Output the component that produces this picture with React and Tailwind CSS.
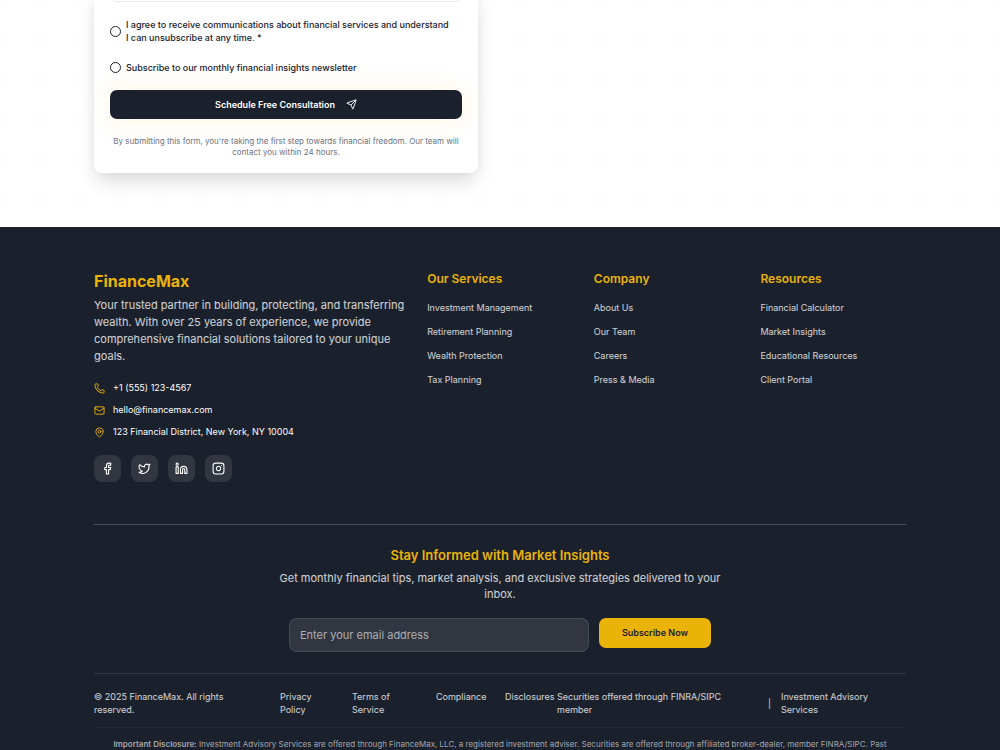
import { Send, Phone, Mail, MapPin, Facebook, Twitter, Linkedin, Instagram } from "lucide-react";

const columns = [
  { title: "Our Services", links: ["Investment Management", "Retirement Planning", "Wealth Protection", "Tax Planning"] },
  { title: "Company", links: ["About Us", "Our Team", "Careers", "Press & Media"] },
  { title: "Resources", links: ["Financial Calculator", "Market Insights", "Educational Resources", "Client Portal"] },
];

const contacts = [
  { icon: Phone, text: "+1 (555) 123-4567" },
  { icon: Mail, text: "hello@financemax.com" },
  { icon: MapPin, text: "123 Financial District, New York, NY 10004" },
];

const socials = [
  { icon: Facebook, name: "Facebook" },
  { icon: Twitter, name: "Twitter" },
  { icon: Linkedin, name: "LinkedIn" },
  { icon: Instagram, name: "Instagram" },
];

function Consent({ id, children }) {
  return (
    <div className="flex items-center gap-[5px]">
      <input
        id={id}
        type="checkbox"
        className="size-[11px] shrink-0 appearance-none rounded-full border border-[#1a202c] bg-white checked:bg-[#1a202c]"
      />
      <label htmlFor={id} className="text-[9px] leading-[13px] font-medium">
        {children}
      </label>
    </div>
  );
}

function ConsultationForm() {
  return (
    <section className="overflow-hidden bg-[radial-gradient(circle,#f8f8f8_1px,transparent_2px)] bg-[size:40px_40px] bg-[position:20px_20px] pb-[54px]">
      <div className="mx-auto max-w-[852px] px-5">
        <form className="-mt-2 w-full max-w-[384px] rounded-b-lg bg-white px-4 pt-[2px] pb-[15px] shadow-[0_10px_20px_-3px_rgba(0,0,0,0.16),0_0_10px_rgba(0,0,0,0.03)]">
          <div className="h-2 rounded-b-lg border-b border-[#e9eaec]" />
          <div className="flex flex-col gap-[17px] pt-4">
            <Consent id="agree">
              I agree to receive communications about financial services and understand
              <br />I can unsubscribe at any time. *
            </Consent>
            <Consent id="newsletter">Subscribe to our monthly financial insights newsletter</Consent>
          </div>
          <button
            type="button"
            className="mt-4 flex h-[29px] w-full items-center justify-center gap-[11px] rounded-[7px] bg-[#1a202c] text-[9px] font-semibold text-white shadow-[0_0_27px_rgba(234,179,8,0.15)]"
          >
            Schedule Free Consultation
            <Send className="size-[11px]" />
          </button>
          <p className="mt-[17px] text-center text-[8px] leading-[11px] text-gray-500">
            By submitting this form, you're taking the first step towards financial freedom. Our team will contact you
            within 24 hours.
          </p>
        </form>
      </div>
    </section>
  );
}

function Footer() {
  return (
    <footer className="grow bg-[#1a202c] pt-[42px] text-white/80">
      <div className="mx-auto max-w-[852px] px-5">
        <div className="grid grid-cols-5 gap-[21px] pb-[42px]">
          <div className="col-span-2">
            <h2 className="text-[16px] leading-[24px] font-bold text-[#eab308]">FinanceMax</h2>
            <p className="mt-1 text-[11px] leading-[17px]">
              Your trusted partner in building, protecting, and transferring wealth. With over 25 years of experience, we
              provide comprehensive financial solutions tailored to your unique goals.
            </p>
            <ul className="mt-4 flex flex-col gap-2">
              {contacts.map(({ icon: Icon, text }) => (
                <li key={text} className="flex items-center gap-2 text-[9px] leading-[14px] text-white">
                  <Icon className="size-[11px] text-[#eab308]" />
                  {text}
                </li>
              ))}
            </ul>
            <div className="mt-4 flex gap-[10px]">
              {socials.map(({ icon: Icon, name }) => (
                <a
                  key={name}
                  href="#"
                  aria-label={name}
                  className="flex size-[27px] items-center justify-center rounded-lg bg-white/10 text-white"
                >
                  <Icon className="size-[13px]" />
                </a>
              ))}
            </div>
          </div>
          {columns.map(({ title, links }) => (
            <nav key={title} aria-label={title}>
              <h3 className="text-[12px] leading-[20px] font-semibold text-[#eab308]">{title}</h3>
              <ul className="mt-3 flex flex-col gap-[11px] text-[9px] leading-[13px]">
                {links.map((link) => (
                  <li key={link}>
                    <a href="#">{link}</a>
                  </li>
                ))}
              </ul>
            </nav>
          ))}
        </div>

        <div className="border-t border-white/20 pt-5 pb-[21px] text-center">
          <h3 className="text-[13px] leading-[20px] font-semibold text-[#eab308]">Stay Informed with Market Insights</h3>
          <p className="mx-auto mt-[5px] max-w-[448px] text-[11px] leading-[16px]">
            Get monthly financial tips, market analysis, and exclusive strategies delivered to your inbox.
          </p>
          <form className="mx-auto mt-4 flex max-w-[422px] items-start gap-[10px]">
            <input
              type="email"
              aria-label="Email address"
              placeholder="Enter your email address"
              className="h-[34px] min-w-0 grow rounded-lg border border-white/10 bg-white/10 px-[10px] text-[11px] text-white placeholder:text-white/60"
            />
            <button
              type="button"
              className="h-[30px] w-[112px] rounded-[7px] bg-[#eab308] text-[9px] font-semibold text-[#1a202c]"
            >
              Subscribe Now
            </button>
          </form>
        </div>

        <div className="flex items-start border-t border-white/10 pt-4 pb-[11px] text-[9px] leading-[13px]">
          <p className="w-[186px] pr-10">© 2025 FinanceMax. All rights reserved.</p>
          <div className="flex">
            <a href="#" className="w-[72px] pr-8">Privacy Policy</a>
            <a href="#" className="w-[84px] pr-8">Terms of Service</a>
            <a href="#" className="w-[69px]">Compliance</a>
            <a href="#" className="w-[52px]">Disclosures</a>
          </div>
          <div className="flex grow items-center">
            <span className="w-[211px] pr-8">Securities offered through FINRA/SIPC member</span>
            <span className="w-[13px]">|</span>
            <span className="w-[125px] pr-5">Investment Advisory Services</span>
          </div>
        </div>

        <div className="border-t border-white/5 pt-[11px] text-center text-[8px] leading-[11px] text-white/60">
          <p>
            <strong className="font-semibold">Important Disclosure:</strong> Investment Advisory Services are offered
            through FinanceMax, LLC, a registered investment adviser. Securities are offered through affiliated
            broker-dealer, member FINRA/SIPC. Past
          </p>
        </div>
      </div>
    </footer>
  );
}

export default function App() {
  return (
    <div className="flex min-h-screen flex-col bg-white font-['Inter',sans-serif] text-[#1a202c]">
      <ConsultationForm />
      <Footer />
    </div>
  );
}
